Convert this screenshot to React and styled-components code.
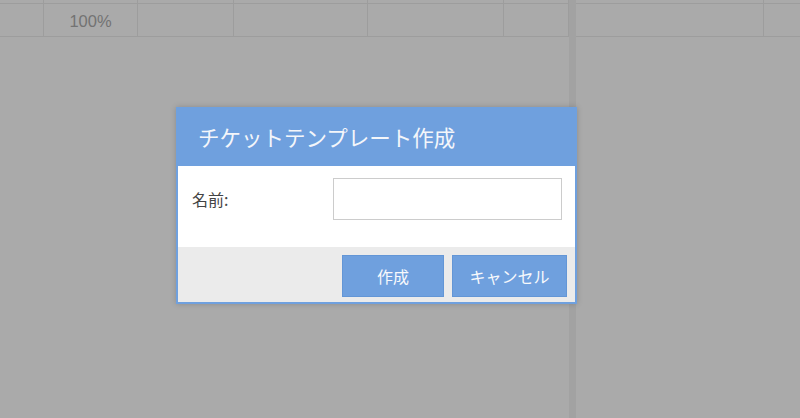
import React from 'react'
import styled, { createGlobalStyle } from 'styled-components'

const Global = createGlobalStyle`
  html, body {
    margin: 0;
    padding: 0;
    background: #aaaaaa;
    font-family: "Noto Sans CJK JP", "Noto Sans", sans-serif;
  }
`

const Page = styled.div`
  position: relative;
  width: 800px;
  height: 418px;
  overflow: hidden;
  background: #aaaaaa;
`

const Grid = styled.div`
  display: flex;
  flex-direction: column;
  margin-top: -30px;
`

const Row = styled.div`
  display: flex;
  height: ${p => p.h}px;
  border-bottom: 1px solid #9d9d9d;
`

const Cell = styled.div`
  width: ${p => p.w}px;
  flex: none;
  box-sizing: border-box;
  border-right: ${p => (p.last ? 'none' : '1px solid #9d9d9d')};
  display: flex;
  align-items: center;
  justify-content: center;
  padding-top: 2px;
  font-family: "Liberation Sans", Arial, sans-serif;
  font-size: 16.5px;
  color: #737373;
`

const Splitter = styled.div`
  position: absolute;
  top: 0;
  bottom: 0;
  left: 569px;
  width: 7px;
  background: #a2a2a2;
`

const Dialog = styled.div`
  position: absolute;
  left: 176px;
  top: 107px;
  width: 401px;
  height: 197px;
  box-sizing: border-box;
  border: 2px solid #6fa0de;
  border-top: none;
  background: #fff;
  box-shadow: 0 0 6px rgba(0, 0, 0, 0.18);
  display: flex;
  flex-direction: column;
`

const Header = styled.div`
  height: 59px;
  margin: 0 -2px;
  padding-left: 22px;
  display: flex;
  align-items: center;
  background: #6fa0de;
  color: #f4f6fa;
  font-size: 21.5px;
`

const Body = styled.div`
  height: 81px;
  box-sizing: border-box;
  padding: 12px 13px 0 14px;
  display: flex;
  align-items: flex-start;
  justify-content: space-between;
`

const Label = styled.label`
  height: 42px;
  display: flex;
  align-items: center;
  font-size: 16px;
  color: #444;
`

const Input = styled.input`
  width: 229px;
  height: 42px;
  box-sizing: border-box;
  border: 1px solid #cccccc;
  outline: none;
`

const Footer = styled.div`
  flex: 1;
  background: #ebebeb;
  padding: 8px 8px 0 0;
  display: flex;
  justify-content: flex-end;
  align-items: flex-start;
  gap: 8px;
`

const Button = styled.button`
  width: ${p => p.w}px;
  height: 42px;
  border: 1px solid #6396d6;
  background: #6fa0de;
  color: #f7f9fc;
  font-family: "Noto Sans CJK JP", "Noto Sans", sans-serif;
  font-size: 16px;
  padding: 0;
`

const cols = [44, 94, 96, 134, 136, 65, 7, 188, 36]

export default () => (
  <Page>
    <Global />
    <Grid>
      <Row h={33}>
        {cols.map((w, i) => <Cell key={i} w={w} last={i === cols.length - 1} />)}
      </Row>
      <Row h={32}>
        {cols.map((w, i) => (
          <Cell key={i} w={w} last={i === cols.length - 1}>{i === 1 ? '100%' : ''}</Cell>
        ))}
      </Row>
    </Grid>
    <Splitter />
    <Dialog>
      <Header>チケットテンプレート作成</Header>
      <Body>
        <Label>名前:</Label>
        <Input />
      </Body>
      <Footer>
        <Button w={102}>作成</Button>
        <Button w={115}>キャンセル</Button>
      </Footer>
    </Dialog>
  </Page>
)
